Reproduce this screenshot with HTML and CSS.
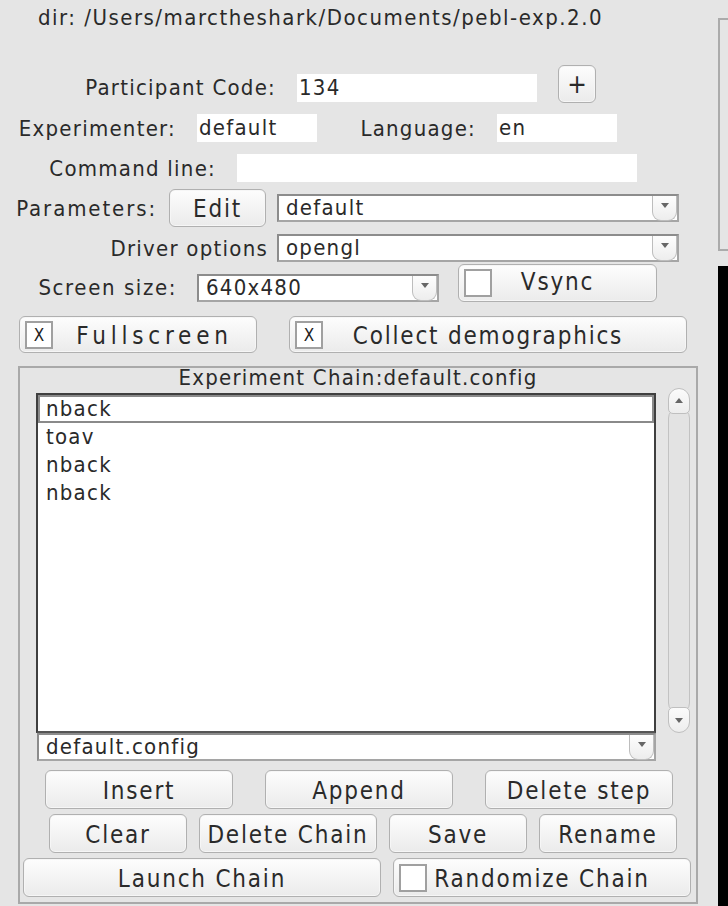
FILE: index.html
```html
<!DOCTYPE html>
<html>
<head>
<meta charset="utf-8">
<link rel="stylesheet" href="styles.css">
</head>
<body>
<div class="app">
  <div class="dir">dir: /Users/marctheshark/Documents/pebl-exp.2.0</div>

  <div class="row row-participant">
    <span class="lbl lbl-participant">Participant Code:</span>
    <span class="field field-participant">134</span>
    <button class="btn btn-plus">+</button>
  </div>

  <div class="row row-exp">
    <span class="lbl lbl-exp">Experimenter:</span>
    <span class="field field-small">default</span>
    <span class="lbl lbl-lang">Language:</span>
    <span class="field field-small">en</span>
  </div>

  <div class="row row-cmd">
    <span class="lbl lbl-cmd">Command line:</span>
    <span class="field field-cmd"></span>
  </div>

  <div class="row row-params">
    <span class="lbl lbl-params">Parameters:</span>
    <button class="btn btn-edit">Edit</button>
    <div class="combo combo-wide"><span class="combo-text">default</span><span class="combo-arrow"></span></div>
  </div>

  <div class="row row-driver">
    <span class="lbl lbl-driver">Driver options</span>
    <div class="combo combo-wide"><span class="combo-text">opengl</span><span class="combo-arrow"></span></div>
  </div>

  <div class="row row-screen">
    <span class="lbl lbl-screen">Screen size:</span>
    <div class="combo combo-screen"><span class="combo-text">640x480</span><span class="combo-arrow"></span></div>
    <button class="btn chk-btn btn-vsync"><span class="chk"></span><span class="chk-text centered">Vsync</span></button>
  </div>

  <div class="row row-flags">
    <button class="btn chk-btn btn-full"><span class="chk">X</span><span class="chk-text">Fullscreen</span></button>
    <button class="btn chk-btn btn-demo"><span class="chk">X</span><span class="chk-text centered">Collect demographics</span></button>
  </div>

  <div class="group">
    <div class="group-title">Experiment Chain:default.config</div>
    <div class="chain">
      <div class="chain-main">
        <div class="list">
          <div class="item selected">nback</div>
          <div class="item">toav</div>
          <div class="item">nback</div>
          <div class="item">nback</div>
        </div>
        <div class="combo combo-chain"><span class="combo-text">default.config</span><span class="combo-arrow"></span></div>
      </div>
      <div class="scrollbar">
        <div class="sb-up"><span class="tri-up"></span></div>
        <div class="sb-track"></div>
        <div class="sb-down"><span class="tri-down"></span></div>
      </div>
    </div>
    <div class="btn-row row-a">
      <button class="btn btn-a">Insert</button>
      <button class="btn btn-a">Append</button>
      <button class="btn btn-a">Delete step</button>
    </div>
    <div class="btn-row row-b">
      <button class="btn btn-b">Clear</button>
      <button class="btn btn-b btn-b-wide">Delete Chain</button>
      <button class="btn btn-b">Save</button>
      <button class="btn btn-b">Rename</button>
    </div>
    <div class="btn-row row-c">
      <button class="btn btn-launch">Launch Chain</button>
      <button class="btn chk-btn btn-random"><span class="chk"></span><span class="chk-text centered">Randomize Chain</span></button>
    </div>
  </div>
</div>
<div class="side-frame"></div>
<div class="side-black"></div>
</body>
</html>
```

FILE: styles.css
```css
* { box-sizing: border-box; }
html, body { margin: 0; padding: 0; }
body {
  width: 728px;
  height: 906px;
  overflow: hidden;
  background: #e5e5e5;
  color: #2a2a2a;
  font-family: "DejaVu Sans Condensed", "DejaVu Sans", sans-serif;
  font-stretch: condensed;
  font-size: 22px;
  letter-spacing: 1.25px;
  position: relative;
}
.app { display: flex; flex-direction: column; }

.dir { margin: 5px 0 0 38px; height: 26px; line-height: 26px; letter-spacing: 1.5px; }

.row { display: flex; align-items: center; height: 28px; }
.lbl { text-align: right; white-space: nowrap; flex: none; }
.field {
  flex: none; height: 28px; line-height: 28px; background: #fff;
  padding-left: 2px; white-space: nowrap;
}

.row-participant { margin-top: 34px; height: 38px; align-items: flex-start; }
.row-participant .lbl { margin-top: 9px; line-height: 28px; }
.lbl-participant { width: 276px; margin-right: 21px; }
.field-participant { width: 240px; margin-top: 9px; margin-right: 21px; }

.btn {
  font: inherit; color: inherit;
  font-size: 24px; letter-spacing: 1.8px;
  border: 1px solid #b0b0b0;
  border-radius: 6px;
  background: linear-gradient(#fdfdfd, #ebebeb);
  box-shadow: inset 0 0 0 1px #f6f6f6;
  padding: 2px 0 0;
  margin: 0;
  flex: none;
  white-space: nowrap;
}
.btn-plus { width: 38px; height: 38px; font-size: 26px; line-height: 32px; letter-spacing: 0; padding: 0; }

.row-exp { margin-top: 11px; }
.lbl-exp { width: 176px; margin-right: 21px; }
.field-small { width: 120px; }
.lbl-lang { width: 159px; margin-right: 21px; }

.row-cmd { margin-top: 12px; }
.lbl-cmd { width: 216px; margin-right: 21px; }
.field-cmd { width: 400px; }

.row-params { margin-top: 7px; height: 38px; }
.lbl-params { width: 157px; margin-right: 12px; letter-spacing: 1.9px; }
.btn-edit { width: 97px; height: 38px; margin-right: 11px; }

.combo {
  flex: none; position: relative; height: 28px; background: #fff;
  border: 2px solid #8c8c8c; border-right-color: #a5a5a5; border-bottom-color: #a5a5a5;
  display: flex; align-items: center;
}
.combo-text { padding-left: 7px; line-height: 24px; white-space: nowrap; }
.combo-wide { width: 402px; }
.combo-arrow {
  position: absolute; right: 0; top: 0; width: 25px; height: 25px;
  border: 1px solid #bdbdbd; border-top: none;
  border-radius: 0 0 9px 9px;
  background: linear-gradient(#fdfdfd, #ededed);
}
.combo-arrow::after {
  content: ""; position: absolute; left: 8px; top: 7px;
  border-left: 4px solid transparent; border-right: 4px solid transparent;
  border-top: 5px solid #666;
}

.row-driver { margin-top: 7px; }
.lbl-driver { width: 268px; margin-right: 9px; }

.row-screen { margin-top: 2px; height: 38px; align-items: flex-end; }
.row-screen .lbl { line-height: 28px; letter-spacing: 1.6px; }
.lbl-screen { width: 177px; margin-right: 20px; }
.combo-screen { width: 242px; margin-right: 19px; }

.chk-btn { display: flex; align-items: center; position: relative; padding: 0; }
.chk {
  flex: none; width: 28px; height: 28px; background: #fff;
  border: 2px solid #a0a0a0; margin-left: 5px;
  font-size: 17px; letter-spacing: 0; line-height: 24px; text-align: center; color: #222;
}
.chk-text { flex: 1; text-align: center; padding-top: 2px; }
.chk-text.centered { margin-right: 33px; }
.btn-vsync { width: 199px; height: 38px; }
.btn-vsync .chk-text { padding-top: 0; margin-top: -2px; }

.row-flags { margin-top: 14px; height: 37px; padding-left: 19px; gap: 32px; }
.btn-full { width: 238px; height: 37px; }
.btn-full .chk-text { padding-left: 0; letter-spacing: 4.8px; }
.btn-demo { width: 398px; height: 37px; }

.group {
  margin: 13px 0 0 18px; width: 680px; height: 538px;
  border: 2px solid #a9a9a9;
  display: flex; flex-direction: column;
}
.group-title { height: 20px; line-height: 20px; text-align: center; }
.chain { display: flex; margin-left: 16px; }
.chain-main { display: flex; flex-direction: column; width: 620px; }
.list {
  margin-top: 5px; height: 340px; background: #fff;
  border: 2px solid #3f3f3f; border-bottom-color: #555;
}
.item { height: 28px; line-height: 28px; padding-left: 8px; }
.item.selected {
  line-height: 24px; padding-left: 6px;
  border: 2px solid #8a8a8a;
}
.combo-chain { width: 619px; margin-left: 1px; }

.scrollbar {
  margin-left: 12px; width: 22px; height: 345px;
  display: flex; flex-direction: column; position: relative;
}
.sb-up, .sb-down {
  height: 26px; background: linear-gradient(#fbfbfb, #ededed);
  border: 1px solid #bfbfbf; position: relative; z-index: 1;
  display: flex; justify-content: center;
}
.sb-up { border-radius: 11px 11px 5px 5px; align-items: flex-start; }
.sb-down { border-radius: 5px 5px 11px 11px; align-items: flex-end; }
.sb-track {
  flex: 1; margin: -6px 0; border: 1px solid #c2c2c2; border-radius: 10px;
  background: #e3e3e3;
}
.tri-up {
  margin-top: 9px; width: 0; height: 0;
  border-left: 4px solid transparent; border-right: 4px solid transparent;
  border-bottom: 5px solid #666;
}
.tri-down {
  margin-bottom: 9px; width: 0; height: 0;
  border-left: 4px solid transparent; border-right: 4px solid transparent;
  border-top: 5px solid #666;
}

.btn-row { display: flex; }
.row-a { margin-top: 9px; padding-left: 25px; gap: 32px; }
.btn-a { width: 188px; height: 39px; }
.row-b { margin-top: 5px; padding-left: 29px; gap: 12px; }
.btn-b { width: 138px; height: 39px; }
.btn-b-wide { width: 178px; }
.row-c { margin-top: 5px; padding-left: 3px; gap: 12px; }
.btn-launch { width: 358px; height: 39px; }
.btn-random { width: 298px; height: 39px; }

.side-frame {
  position: absolute; left: 718px; top: 18px; width: 20px; height: 233px;
  border: 2px solid #ababab;
}
.side-black {
  position: absolute; left: 718px; top: 266px; width: 10px; height: 640px;
  background: #000;
}
```
